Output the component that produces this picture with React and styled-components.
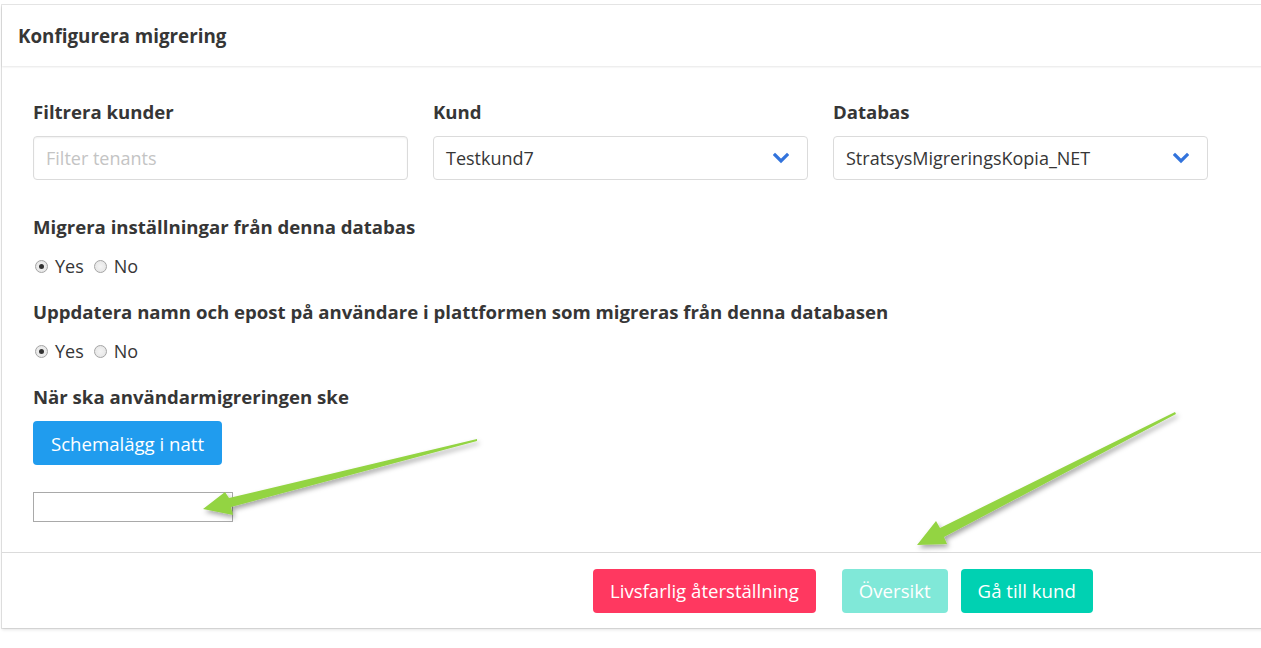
import React from "react";
import styled, { createGlobalStyle } from "styled-components";

const Global = createGlobalStyle`
  html, body {
    margin: 0;
    padding: 0;
    background: #fff;
    overflow: hidden;
  }
  body {
    font-family: "Open Sans", "Noto Sans", sans-serif;
    color: #363636;
  }
`;

const Page = styled.div`
  position: relative;
  width: 1261px;
  height: 648px;
  padding: 5px 0 0 2px;
  box-sizing: border-box;
`;

const Card = styled.div`
  width: 1280px;
  background: #fff;
  box-shadow: 0 2px 3px rgba(10, 10, 10, 0.1), 0 0 0 1px rgba(10, 10, 10, 0.1);
`;

const Header = styled.header`
  height: 61px;
  display: flex;
  align-items: center;
  padding-left: 16px;
  box-shadow: 0 1px 2px rgba(10, 10, 10, 0.1);
`;

const Title = styled.h2`
  margin: 0;
  font-size: 18.8px;
  font-weight: 700;
  color: #363636;
`;

const Body = styled.div`
  padding: 33px 31px 30px;
  display: flex;
  flex-direction: column;
`;

const Columns = styled.div`
  display: grid;
  grid-template-columns: repeat(3, 375px);
  column-gap: 25px;
`;

const Field = styled.div`
  display: flex;
  flex-direction: column;
`;

const Label = styled.label`
  font-size: 18.6px;
  font-weight: 700;
  line-height: 26px;
  height: 26px;
  white-space: nowrap;
  color: #363636;
  margin: ${(p) => p.$mt || 0}px 0 0;
`;

const Input = styled.input`
  margin-top: 11px;
  height: 44px;
  box-sizing: border-box;
  border: 1px solid #dbdbdb;
  border-radius: 4px;
  padding: 0 12px;
  font-family: inherit;
  font-size: 18px;
  color: #363636;
  box-shadow: inset 0 1px 2px rgba(10, 10, 10, 0.06);
  &::placeholder {
    color: #c4c4c4;
  }
`;

const Select = styled.div`
  margin-top: 11px;
  height: 44px;
  box-sizing: border-box;
  border: 1px solid #dbdbdb;
  border-radius: 4px;
  padding: 0 18px 0 12px;
  display: flex;
  align-items: center;
  justify-content: space-between;
  font-size: 18px;
  color: #363636;
`;

const Radios = styled.div`
  display: flex;
  align-items: center;
  height: 26px;
  margin-top: 13px;
  font-size: 18px;
  color: #363636;
`;

const RadioLabel = styled.label`
  display: flex;
  align-items: center;
  margin-right: 8px;
`;

const Radio = styled.input.attrs({ type: "radio" })`
  appearance: none;
  margin: 0 7px 0 2px;
  width: 13px;
  height: 13px;
  box-sizing: border-box;
  border-radius: 50%;
  border: 1px solid #a5a5a5;
  background: radial-gradient(circle, #f4f4f4 0%, #e2e2e2 100%);
  display: inline-grid;
  place-content: center;
  &:checked::before {
    content: "";
    width: 5px;
    height: 5px;
    border-radius: 50%;
    background: #333;
  }
`;

const Button = styled.button`
  height: 44px;
  border: none;
  border-radius: 4px;
  padding: 0 17px;
  font-family: inherit;
  font-size: 18.6px;
  color: #fff;
  background: ${(p) => p.$bg};
  margin-left: ${(p) => p.$ml || 0}px;
  cursor: pointer;
`;

const ScheduleButton = styled(Button)`
  align-self: flex-start;
  margin-top: 11px;
  padding: 0 18px;
`;

const TimeBox = styled.input`
  margin-top: 27px;
  width: 200px;
  height: 30px;
  box-sizing: border-box;
  border: 1px solid #a9a9a9;
  padding: 0 4px;
`;

const Footer = styled.footer`
  border-top: 1px solid #dbdbdb;
  height: 75px;
  display: flex;
  align-items: center;
  padding-left: 591px;
`;

const Overlay = styled.svg`
  position: absolute;
  left: 0;
  top: 0;
  pointer-events: none;
`;

function Chevron() {
  return (
    <svg width="16" height="12" viewBox="0 0 16 12">
      <polyline
        points="2,3 8,9 14,3"
        fill="none"
        stroke="#3273dc"
        strokeWidth="3.2"
        strokeLinecap="square"
      />
    </svg>
  );
}

function YesNo({ name }) {
  return (
    <Radios>
      <RadioLabel>
        <Radio name={name} defaultChecked /> Yes
      </RadioLabel>
      <RadioLabel>
        <Radio name={name} /> No
      </RadioLabel>
    </Radios>
  );
}

function Arrows() {
  return (
    <Overlay width="1261" height="648">
      <defs>
        <filter id="sh" x="-20%" y="-50%" width="140%" height="200%">
          <feDropShadow dx="2" dy="3" stdDeviation="2.5" floodColor="#000" floodOpacity="0.35" />
        </filter>
      </defs>
      <polygon
        filter="url(#sh)"
        fill="#93d443"
        points="203,509 225,492 229,498 477,439 477,441 231,507 233,515"
      />
      <polygon
        filter="url(#sh)"
        fill="#93d443"
        points="917,545 936,521 940,528 1175,412 1176,414 944,537 947,544"
      />
    </Overlay>
  );
}

export default function App() {
  return (
    <Page>
      <Global />
      <Card>
        <Header>
          <Title>Konfigurera migrering</Title>
        </Header>
        <Body>
          <Columns>
            <Field>
              <Label>Filtrera kunder</Label>
              <Input placeholder="Filter tenants" />
            </Field>
            <Field>
              <Label>Kund</Label>
              <Select>
                Testkund7
                <Chevron />
              </Select>
            </Field>
            <Field>
              <Label>Databas</Label>
              <Select>
                StratsysMigreringsKopia_NET
                <Chevron />
              </Select>
            </Field>
          </Columns>
          <Label $mt={34}>Migrera inställningar från denna databas</Label>
          <YesNo name="settings" />
          <Label $mt={20}>
            Uppdatera namn och epost på användare i plattformen som migreras från denna databasen
          </Label>
          <YesNo name="users" />
          <Label $mt={20}>När ska användarmigreringen ske</Label>
          <ScheduleButton $bg="#209cee">Schemalägg i natt</ScheduleButton>
          <TimeBox />
        </Body>
        <Footer>
          <Button $bg="#ff3860">Livsfarlig återställning</Button>
          <Button $bg="#80e8d8" $ml={26}>Översikt</Button>
          <Button $bg="#00d1b2" $ml={13}>Gå till kund</Button>
        </Footer>
      </Card>
      <Arrows />
    </Page>
  );
}
